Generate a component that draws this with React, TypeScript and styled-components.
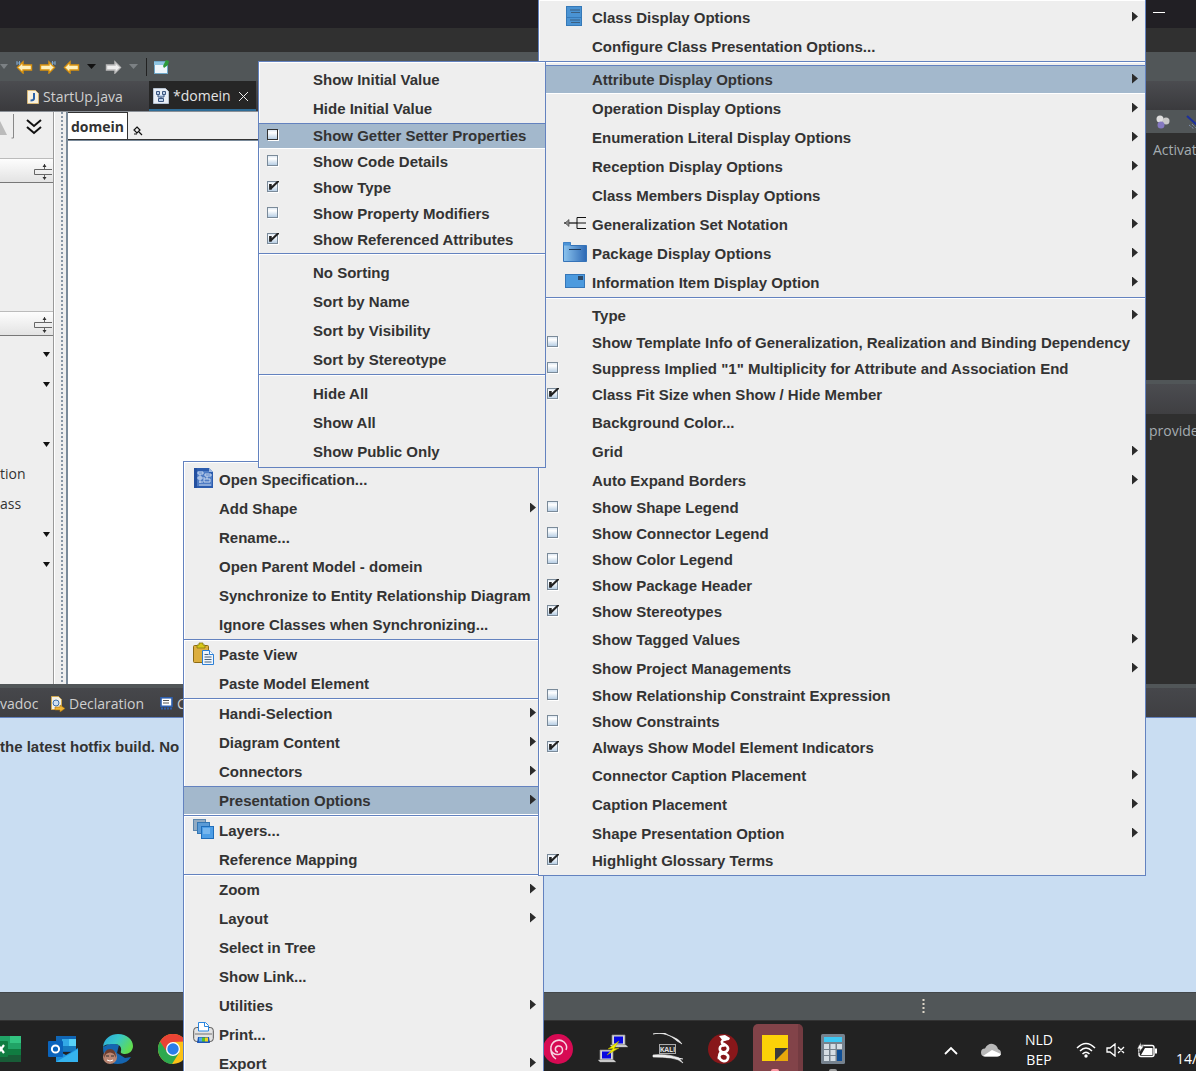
import React from "react";
import styled, { createGlobalStyle, css } from "styled-components";

const MENU_FONT = '"Liberation Sans", Arial, sans-serif';
const UI_FONT = '"Open Sans", "Noto Sans", sans-serif';
const LINE = "#6382bf";
const FACE = "#eeeeee";

const Global = createGlobalStyle`
  *, *::before, *::after { box-sizing: border-box; }
  html, body { margin: 0; height: 100%; overflow: hidden; background: #222; }
  button { border: 0; margin: 0; padding: 0; background: none; font: inherit; color: inherit; text-align: left; }
  svg { display: block; flex: none; }
`;

const Desktop = styled.div`
  position: relative;
  display: flex;
  flex-direction: column;
  height: 100vh;
  overflow: hidden;
  font: 14px/20px ${UI_FONT};
  color: #333;
  white-space: nowrap;
`;

/* ---------- application frame ---------- */

const TitleBar = styled.header`
  display: flex;
  justify-content: flex-end;
  align-items: center;
  height: 28px;
  padding-right: 31px;
  background: #211f24;
`;
const Minimize = styled.button`
  width: 12px;
  height: 4px;
  border-bottom: 1px solid #fff;
  margin-bottom: 6px;
`;
const MenuStrip = styled.div`
  height: 24px;
  background: #303030;
`;
const Toolbar = styled.div`
  display: flex;
  align-items: center;
  height: 29px;
  background: #515658;
`;
const Workbench = styled.main`
  display: flex;
  flex: 1;
  min-height: 0;
`;
const Editor = styled.section`
  display: flex;
  flex-direction: column;
  flex: 1;
  min-width: 0;
`;
const EditorTabs = styled.div`
  display: flex;
  height: 31px;
  padding-left: 17px;
  background: linear-gradient(#4b4c50, #3a3a3d);
  border-bottom: 1px solid #8a8f96;
`;
const EditorTab = styled.button<{ $active?: boolean }>`
  display: flex;
  align-items: center;
  gap: 4px;
  padding: 2px 10px 0;
  width: ${(p) => (p.$active ? 107 : 132)}px;
  color: ${(p) => (p.$active ? "#e4e4e4" : "#cfcfcf")};
  ${(p) =>
    p.$active &&
    css`
      padding: 2px 4px 0;
      background: #262626;
      border-bottom: 2px solid #2f6c96;
    `}
`;
const TabLabel = styled.span`
  flex: 1;
`;
const CloseTab = styled.span`
  padding-right: 3px;
`;
const EditorBody = styled.div`
  display: flex;
  flex: 1;
  min-height: 0;
  background: ${FACE};
`;
const Palette = styled.aside`
  display: flex;
  flex-direction: column;
  width: 54px;
  border-right: 1px solid #999;
  overflow: hidden;
`;
const PaletteTools = styled.div`
  display: flex;
  height: 46px;
`;
const PaletteHeader = styled.div`
  display: flex;
  justify-content: flex-end;
  align-items: center;
  height: 25px;
  border-top: 1px solid #bbb;
  border-bottom: 1px solid #777;
  background: linear-gradient(#fdfdfd, #e3e3e3);
`;
const PaletteSpace = styled.div`
  height: 128px;
`;
const PaletteList = styled.div`
  padding-top: 3px;
`;
const PaletteRow = styled.button`
  display: flex;
  justify-content: space-between;
  align-items: center;
  width: 100%;
  height: 30px;
  padding-right: 3px;
`;
const Splitter = styled.div`
  width: 14px;
  border-left: 1px solid #fff;
  border-right: 2px solid #7a8a99;
  background: radial-gradient(circle at 1px 1px, #8796a6 1px, transparent 1px) 6px 0 / 3px 4px repeat-y, ${FACE};
`;
const DiagramPane = styled.div`
  display: flex;
  flex-direction: column;
  flex: 1;
  min-width: 0;
  background: #fff;
`;
const Breadcrumb = styled.nav`
  display: flex;
  align-items: flex-start;
  gap: 5px;
  height: 29px;
  background: ${FACE};
  border-bottom: 1px solid #7a8a99;
  box-shadow: inset 0 -1px #333;
`;
const Crumb = styled.button`
  height: 28px;
  padding: 2px 3px 0;
  border: 1px solid #333;
  border-left: 0;
  background: #fff;
  font-weight: 700;
`;
const CrumbIcon = styled.span`
  padding-top: 14px;
`;

const SidePanel = styled.aside`
  display: flex;
  flex-direction: column;
  width: 60px;
  overflow: hidden;
  background: #2f2f2f;
  color: #a4acb0;
`;
const SideTabs = styled.div`
  height: 29px;
  background: linear-gradient(#4b4c50, #3a3a3d);
`;
const SideTools = styled.div`
  display: flex;
  align-items: center;
  gap: 8px;
  height: 23px;
  padding-left: 12px;
  background: #515658;
`;
const SideText = styled.p<{ $h?: number }>`
  margin: 0;
  padding: 7px 0 0 ${(p) => (p.$h ? 17 : 13)}px;
  height: ${(p) => (p.$h ? p.$h + "px" : "auto")};
`;
const SideBand = styled.div`
  height: 34px;
  border-top: 4px solid #515658;
  background: linear-gradient(#4b4c50, #3f3f42);
`;

const ViewTabs = styled.div`
  display: flex;
  align-items: center;
  height: 34px;
  padding-top: 4px;
  border-top: 4px solid #515658;
  border-bottom: 1px solid ${LINE};
  background: linear-gradient(#46474b, #3f3f42);
  color: #cfcfcf;
`;
const ViewTab = styled.button<{ $w: number }>`
  display: flex;
  align-items: center;
  gap: 4px;
  width: ${(p) => p.$w}px;
  height: 20px;
  padding-bottom: 2px;
`;
const Console = styled.section`
  height: 274px;
  padding-top: 19px;
  background: #c9ddf2;
  font: 700 15px/20px ${MENU_FONT};
`;
const StatusBar = styled.footer`
  display: flex;
  justify-content: flex-end;
  align-items: center;
  height: 28px;
  padding-right: 271px;
  border-top: 1px solid #43474a;
  background: #515658;
`;

/* ---------- taskbar ---------- */

const Taskbar = styled.footer`
  display: flex;
  align-items: center;
  height: 51px;
  border-top: 1px solid #333;
  background: #222;
  color: #fff;
  overflow: hidden;
`;
const TaskButton = styled.button<{ $w?: number; $running?: boolean }>`
  display: flex;
  justify-content: center;
  align-items: ${(p) => (p.$running ? "flex-end" : "center")};
  flex: none;
  width: ${(p) => p.$w ?? 55}px;
  height: 50px;
  padding-top: ${(p) => (p.$running ? 0 : 6)}px;
`;
const ActiveTask = styled.span`
  position: relative;
  display: flex;
  justify-content: center;
  align-items: center;
  width: 50px;
  height: 47px;
  border-radius: 5px 5px 0 0;
  background: #824349;
  border-right: 5px solid #733b41;
`;
const TaskGap = styled.div`
  width: 330px;
`;
const Tray = styled.div`
  display: flex;
  align-items: center;
  height: 50px;
  margin-left: auto;
  padding-top: 8px;
`;
const TrayButton = styled.button<{ $w: number }>`
  display: flex;
  justify-content: center;
  width: ${(p) => p.$w}px;
  text-align: center;
`;
const Clock = styled.time`
  width: 30px;
  padding: 18px 0 0 10px;
`;

/* ---------- pop-up menus ---------- */

const Popup = styled.div<{ $x: number; $y: number; $w: number; $lead: number; $gap: number; $z: number }>`
  position: absolute;
  left: ${(p) => p.$x}px;
  top: ${(p) => p.$y}px;
  z-index: ${(p) => p.$z};
  width: ${(p) => p.$w}px;
  padding: 3px 0 1px;
  border: 1px solid ${LINE};
  background: ${FACE};
  box-shadow: inset 1px 1px #fff;
  font: 700 15px/20px ${MENU_FONT};
  --lead: ${(p) => p.$lead}px;
  --gap: ${(p) => p.$gap}px;
`;
const rowStyle = css<{ $on?: boolean }>`
  display: flex;
  align-items: center;
  width: 100%;
  padding-right: 7px;
  ${(p) =>
    p.$on &&
    css`
      background: #a3b8cc;
      box-shadow: inset 0 1px ${LINE}, inset 0 -1px #fff;
    `}
`;
const MenuRow = styled.button<{ $on?: boolean }>`
  ${rowStyle}
  height: 29px;
`;
const CheckRow = styled.label<{ $on?: boolean }>`
  ${rowStyle}
  height: 26px;
`;
const Lead = styled.span<{ $check?: boolean }>`
  display: flex;
  flex: none;
  justify-content: ${(p) => (p.$check ? "flex-start" : "flex-end")};
  width: var(--lead);
  padding: ${(p) => (p.$check ? "0 0 3px 8px" : "0 5px 3px 0")};
`;
const RowText = styled.span`
  flex: 1;
`;
const Rule = styled.hr`
  height: 1px;
  margin: 0 0 var(--gap);
  border: 0;
  background: ${LINE};
  box-shadow: 0 1px #fff;
`;
const Arrow = styled.span`
  width: 6px;
  height: 10px;
  margin-bottom: 2px;
  background: #2b2b2b;
  clip-path: polygon(0 0, 100% 50%, 0 100%);
`;
const Check = styled.input<{ $on?: boolean }>`
  appearance: none;
  width: 11px;
  height: 11px;
  margin: 0;
  border: 1px solid ${(p) => (p.$on ? "#333" : "#7a8a99")};
  background: linear-gradient(#dfe9f3, #fff 30%, #b8cfe5);
  box-shadow: 1px 1px #fff;
  &:checked::after {
    content: "";
    display: block;
    width: 11px;
    height: 10px;
    margin-top: -1px;
    background: #222;
    clip-path: polygon(10% 30%, 34% 30%, 34% 50%, 82% 0, 100% 0, 100% 10%, 34% 80%, 34% 88%, 10% 88%);
  }
`;

/* ---------- drawings ---------- */

const ClassIcon = () => (
  <svg width="21" height="20" viewBox="0 0 21 20">
    <rect x="0" y="0" width="16" height="20" fill="#4a93d3" />
    <path d="M0 .5h16M0 11.5h16M0 19.5h16M.5 0v20M15.500 0v20" stroke="#3579b8" fill="none" />
    <path d="M4 4h10M5 6.500h9M4 14h10M5 16.500h9" stroke="#3b5f80" fill="none" />
  </svg>
);
const GenSetIcon = () => (
  <svg width="24" height="12" viewBox="0 0 24 12">
    <path d="M1 6h13" stroke="#666" strokeWidth="2" />
    <path d="M2 6l4-3.500v7z" fill="#888" stroke="#333" strokeWidth=".6" />
    <path d="M23 .5h-9v11h9M14 6h9" stroke="#111" fill="none" />
  </svg>
);
const PackageIcon = () => (
  <svg width="24" height="20" viewBox="0 0 24 20">
    <defs>
      <linearGradient id="pk"><stop offset="0" stopColor="#8cc4ee" /><stop offset="1" stopColor="#2c68b4" /></linearGradient>
    </defs>
    <path d="M.5.5h7v3h16v16H.5z" fill="url(#pk)" stroke="#3573b8" />
    <path d="M.5.5h7v3h-7z" fill="#4b93d6" />
    <path d="M6 7.500h12" stroke="#1e3b5c" />
  </svg>
);
const InfoIcon = () => (
  <svg width="23" height="14" viewBox="0 0 23 14">
    <rect x="1.500" y=".5" width="19" height="13" fill="#4c9ade" stroke="#3576b8" />
    <rect x="14" y="2" width="5" height="4" fill="#2f4a66" />
  </svg>
);
const SpecIcon = () => (
  <svg width="21" height="22" viewBox="0 0 21 22">
    <path d="M1 1h15l4 4v16H1z" fill="#2c5cae" />
    <path d="M1 1h3v20H1z" fill="#2450a0" />
    <path d="M16 1v4h4z" fill="#9db9e4" />
    <path d="M4 4h12v3h3v12H4z" fill="#4f7cc4" />
    <path d="M5 5h5v2H5zM12 7h6v2h-6zM5 10h4v2H5zM11 12h6v3h-6zM6 15h4M7 7v9M14 9v3M6 18h12M10 11h2" fill="none" stroke="#d3e0f4" strokeWidth=".9" />
  </svg>
);
const PasteIcon = () => (
  <svg width="21" height="23" viewBox="0 0 21 23">
    <rect x=".5" y="3.500" width="15" height="17" rx="1" fill="#dcae3f" stroke="#8c6a14" />
    <path d="M4 3h2V1h4v2h2v3H4z" fill="#d8c818" stroke="#877a0c" strokeWidth=".8" />
    <path d="M9.500 8.500h7l4 4v10h-11z" fill="#eef5fd" stroke="#2a7fd6" />
    <path d="M16.500 8.500v4h4" fill="#fff" stroke="#2a7fd6" />
    <path d="M11.500 12.500h4M11.500 15h7M11.500 17.500h7M11.500 20h7" stroke="#48627c" />
  </svg>
);
const LayersIcon = () => (
  <svg width="21" height="20" viewBox="0 0 21 20">
    <rect x=".5" y=".5" width="12" height="11" fill="#93abc2" stroke="#5c86ad" />
    <rect x="4.500" y="3.500" width="12" height="11" fill="#5b9bd6" stroke="#3477b4" />
    <rect x="8.500" y="7.500" width="12" height="12" fill="#4d9ee6" stroke="#1f6dbb" />
    <rect x="10" y="9" width="7" height="6" fill="#76b6ee" />
  </svg>
);
const PrintIcon = () => (
  <svg width="21" height="22" viewBox="0 0 21 22">
    <rect x=".7" y="5.500" width="19.600" height="14" rx="3" fill="#e3e3e3" stroke="#555" />
    <path d="M5.500 9V.5h7l3 3V9z" fill="#fff" stroke="#2a86e0" />
    <path d="M11.500.5v4h4" fill="none" stroke="#2a86e0" />
    <path d="M2 12h17" stroke="#aaa" strokeWidth="2" />
    <path d="M5 15h11l1 6H4z" fill="#1d56b8" />
    <path d="M6 15.500h3v4H6z" fill="#4fa8e8" /><path d="M9 15.500h3v4H9z" fill="#58bf2c" /><path d="M12 15.500h3v4h-3z" fill="#f0d31c" />
  </svg>
);

const NavArrow = ({ flip, white, mark }: { flip?: boolean; white?: boolean; mark?: boolean }) => (
  <svg width="17" height="14" viewBox="0 0 17 14">
    <g transform={flip ? "matrix(-1 0 0 1 17 0)" : undefined}>
      <path
        d="M1.500 7.500L7 2v3h8.500v5H7v3z"
        fill={white ? "#eee" : "#fdf0bd"}
        stroke={white ? "#bbb" : "#d9920f"}
        strokeWidth="1.400"
      />
      {mark && <path d="M1 1v4M3.500 1v4M.5 3h4" stroke="#7fa4c8" fill="none" />}
    </g>
  </svg>
);
const Caret = ({ color = "#111", w = 9 }: { color?: string; w?: number }) => (
  <svg width={w} height="5" viewBox="0 0 9 5" preserveAspectRatio="none"><path d="M0 0h9L4.500 5z" fill={color} /></svg>
);
const Tools = styled.div`
  display: flex;
  align-items: center;
`;
const Slot = styled.button<{ $w: number }>`
  width: ${(p) => p.$w}px;
`;
const Bar = styled.span<{ $h: number; $c?: string }>`
  width: 1px;
  height: ${(p) => p.$h}px;
  background: ${(p) => p.$c ?? "#222"};
`;
const WindowIcon = () => (
  <svg width="24" height="16" viewBox="0 0 24 16">
    <rect x="7.500" y="2.500" width="13" height="12" fill="#eef6fb" stroke="#6fa7c8" />
    <path d="M7 3h14v3H7z" fill="#8ec5e2" />
    <path d="M16 7l3-6 3 1-1 4-4 3z" fill="#2c9a3a" />
  </svg>
);
const JavaIcon = () => (
  <svg width="12" height="14" viewBox="0 0 12 14">
    <path d="M.5.5h8l3 3v10H.5z" fill="#f7f1df" stroke="#d8b878" />
    <path d="M7 3v5.500q0 2-3.500 2" fill="none" stroke="#2b62a8" strokeWidth="2" />
  </svg>
);
const DiagramIcon = () => (
  <svg width="16" height="16" viewBox="0 0 16 16">
    <path d="M.5.5h12l3 3v12H.5z" fill="#e8eef6" stroke="#b6c2d0" />
    <path d="M3.500 3.500h3v3h-3zM9.500 3.500h3v3h-3zM5.500 10.500h5v3h-5zM5 7v2h6V7M8 9v1.500" fill="#bcd0ea" stroke="#3b5680" />
  </svg>
);
const CloseIcon = () => (
  <svg width="11" height="11" viewBox="0 0 11 11"><path d="M1 1l9 9M10 1l-9 9" stroke="#eee" /></svg>
);
const CollapseIcon = () => (
  <svg width="20" height="20" viewBox="0 0 20 20">
    <path d="M19 8.500H1.500v5H19M11.500 3v5M11.500 14v4" fill="none" stroke="#666" />
    <path d="M9.500 6l2-3 2 3zM9.500 16l2 3 2-3z" fill="#333" />
  </svg>
);
const DeclIcon = () => (
  <svg width="15" height="16" viewBox="0 0 15 16">
    <path d="M1.500.5h7l3 3v10h-10z" fill="#f4f1e6" stroke="#d0a850" />
    <circle cx="6" cy="7" r="3" fill="#cfe0f2" stroke="#3b6ea8" />
    <path d="M5 11h5V9l5 3.500-5 3.500v-2H5z" fill="#f0b434" stroke="#a8700c" strokeWidth=".6" />
  </svg>
);
const ConsoleIcon = () => (
  <svg width="13" height="13" viewBox="0 0 13 13">
    <rect x="1" y=".8" width="11" height="8.500" fill="#fff" stroke="#2e5fae" strokeWidth="1.600" />
    <path d="M3 3.500h6M3 6h6" stroke="#555" /><path d="M1 11.500h11" stroke="#2e5fae" strokeWidth="2" strokeDasharray="2 1" />
  </svg>
);

const Excel = () => (
  <svg width="56" height="30" viewBox="0 0 56 30">
    <path d="M6 2h25v26H6z" fill="#21a366" /><path d="M20 2h11v7H20z" fill="#33c481" /><path d="M6 15h25v13H6z" fill="#107c41" /><path d="M6 21h25v7H6z" fill="#185c37" />
    <rect x="2" y="7" width="16" height="16" rx="1" fill="#107c41" />
    <path d="M8 11l6 8M14 11l-6 8" stroke="#fff" strokeWidth="2.200" />
  </svg>
);
const Outlook = () => (
  <svg width="30" height="28" viewBox="0 0 30 28">
    <path d="M8 1h20v16H8z" fill="#1066b5" /><path d="M14 4h7v8h-7z" fill="#32a9e7" /><path d="M21 4h7v8h-7z" fill="#58d2f8" /><path d="M14 11h14v5H14z" fill="#167abf" />
    <path d="M8 27V15l10 5 12-7v14z" fill="#1b8fdc" /><path d="M8 27l22-13v13z" fill="#35b3ee" />
    <rect x="0" y="6" width="15" height="16" rx="1" fill="#0b64bc" /><circle cx="7.500" cy="14" r="3.600" fill="none" stroke="#fff" strokeWidth="2" />
  </svg>
);
const Edge = () => (
  <svg width="32" height="32" viewBox="0 0 32 32">
    <defs>
      <linearGradient id="ed" x1="0" y1="0" x2="1" y2=".5"><stop offset="0" stopColor="#2aa5e0" /><stop offset=".5" stopColor="#38c8c8" /><stop offset="1" stopColor="#60dc50" /></linearGradient>
    </defs>
    <path d="M1 14q0 17 15 17 9 0 13-7l-6 1-8-5 2-8-8-2z" fill="#1565b0" />
    <path d="M1 14C2 5 9 1 16 1c9 0 15 6 15 12 0 5-4 8-8 8-3 0-5-1-4-3 1-4-2-7-6-7-6 0-10 0-12 3z" fill="url(#ed)" />
    <circle cx="8" cy="24" r="7" fill="#b98572" /><path d="M2 25q0-9 6-9t6 9l-2-4q-4-3-8 0z" fill="#6a3c2e" /><path d="M4 23h3M9 23h3" stroke="#333" /><path d="M5 27q3 2 6 0" stroke="#fff" fill="none" />
  </svg>
);
const Chrome = () => (
  <svg width="30" height="30" viewBox="0 0 30 30">
    <circle cx="15" cy="15" r="15" fill="#fbc116" />
    <path d="M2 7.500A15 15 0 0 1 28 7.500L15 8 8.500 19z" fill="#ea4335" /><path d="M2 7.500A15 15 0 0 0 14 30l7-11-12-1z" fill="#2da94f" />
    <circle cx="15" cy="15" r="7" fill="#fff" /><circle cx="15" cy="15" r="5.700" fill="#2b7de9" />
  </svg>
);
const Debian = () => (
  <svg width="30" height="30" viewBox="0 0 30 30">
    <circle cx="15" cy="15" r="15" fill="#d70a53" />
    <path d="M15 18c-3 0-4-5 0-6 5-1 6 6 2 8-5 2-10-2-9-7 1-6 8-9 13-5 3 3 3 6 2 8M8 12c-1 7 2 11 5 13" fill="none" stroke="#f6d5e1" strokeWidth="1.500" />
  </svg>
);
const Putty = () => (
  <svg width="30" height="30" viewBox="0 0 30 30">
    <g id="pc"><path d="M14 1h13v10H14z" fill="#d8d8d8" stroke="#888" strokeWidth=".7" /><path d="M16 2.500h9v7h-9z" fill="#0808e0" /><path d="M12 11h16l2 2H14z" fill="#eee" stroke="#777" strokeWidth=".6" /></g>
    <use href="#pc" x="-12" y="15" />
    <path d="M21 7l-11 8 5-.5L9 21l12-7-5 .5z" fill="#f5f000" stroke="#a8a400" strokeWidth=".5" />
  </svg>
);
const KaliName = styled.text`
  font: 700 7px ${UI_FONT};
`;
const Kali = () => (
  <svg width="32" height="32" viewBox="0 0 32 32">
    <path d="M1 1c9-2 18 1 24 7l5 3q-3-5-9-7t-8-4q-6-1-12 1zM1 22c10-1 19 0 26 3l4 5q-4-4-12-5t-18-1z" fill="#eee" stroke="#eee" strokeWidth=".6" />
    <path d="M14 24q10 0 17 2" fill="none" stroke="#eee" />
    <rect x="7.500" y="11.500" width="16" height="9" fill="#2c2c2c" stroke="#aaa" />
    <KaliName x="15.500" y="19" textAnchor="middle" fill="#ddd">KALI</KaliName>
  </svg>
);
const WireGuard = () => (
  <svg width="30" height="30" viewBox="0 0 30 30">
    <circle cx="15" cy="15" r="15" fill="#88171a" />
    <path d="M11 2l6-1 5 3-1 2-6 1z" fill="#fff" />
    <path d="M18 5c-3 1-5 2-4 4 4 2 8 4 5 8-2 2-6 2-7-1s2-6 5-4M13 18c-3 3-2 8 2 9 5 1 7-5 3-7s-8 1-7 5" fill="none" stroke="#fff" strokeWidth="2.600" />
  </svg>
);
const Sticky = () => (
  <svg width="26" height="26" viewBox="0 0 26 26">
    <path d="M0 0h26v26H0z" fill="#fcd208" /><path d="M13 26l13-13v13z" fill="#e8a80c" /><path d="M13 13h13L13 26z" fill="#3b3b3b" />
  </svg>
);
const Calculator = () => (
  <svg width="24" height="30" viewBox="0 0 24 30">
    <rect width="24" height="30" rx="1.500" fill="#76828e" /><path d="M3 3h18v5H3z" fill="#3ec8f4" />
    <path d="M3 10h5v5H3zM9.500 10h5v5h-5zM16 10h5v5h-5zM3 16h5v5H3zM9.500 16h5v5h-5zM3 22h5v5H3zM9.500 22h5v5h-5z" fill="#d5dde4" /><path d="M16 16h5v11h-5z" fill="#0f4f96" />
  </svg>
);
const Pill = styled.span<{ $c: string }>`
  position: absolute;
  left: 50%;
  bottom: 0;
  width: 8px;
  height: 2px;
  margin-left: -4px;
  border-radius: 2px 2px 0 0;
  background: ${(p) => p.$c};
`;
const RunningTask = styled.span`
  position: relative;
  display: flex;
  align-items: center;
  height: 45px;
`;

/* ---------- menu data ---------- */

type Item =
  | "-"
  | { t: string; icon?: React.ReactNode; sub?: boolean; check?: boolean; on?: boolean };

const i = (t: string, o: object = {}): Item => ({ t, ...o });
const s = (t: string, o: object = {}): Item => ({ t, sub: true, ...o });
const c = (t: string, check = false, on = false): Item => ({ t, check, on });

const contextMenu: Item[] = [
  i("Open Specification...", { icon: <SpecIcon /> }),
  s("Add Shape"),
  i("Rename..."),
  i("Open Parent Model - domein"),
  i("Synchronize to Entity Relationship Diagram"),
  i("Ignore Classes when Synchronizing..."),
  "-",
  i("Paste View", { icon: <PasteIcon /> }),
  i("Paste Model Element"),
  "-",
  s("Handi-Selection"),
  s("Diagram Content"),
  s("Connectors"),
  s("Presentation Options", { on: true }),
  "-",
  i("Layers...", { icon: <LayersIcon /> }),
  i("Reference Mapping"),
  "-",
  s("Zoom"),
  s("Layout"),
  i("Select in Tree"),
  i("Show Link..."),
  s("Utilities"),
  i("Print...", { icon: <PrintIcon /> }),
  s("Export"),
];

const presentationMenu: Item[] = [
  s("Class Display Options", { icon: <ClassIcon /> }),
  i("Configure Class Presentation Options..."),
  "-",
  s("Attribute Display Options", { on: true }),
  s("Operation Display Options"),
  s("Enumeration Literal Display Options"),
  s("Reception Display Options"),
  s("Class Members Display Options"),
  s("Generalization Set Notation", { icon: <GenSetIcon /> }),
  s("Package Display Options", { icon: <PackageIcon /> }),
  s("Information Item Display Option", { icon: <InfoIcon /> }),
  "-",
  s("Type"),
  c("Show Template Info of Generalization, Realization and Binding Dependency"),
  c('Suppress Implied "1" Multiplicity for Attribute and Association End'),
  c("Class Fit Size when Show / Hide Member", true),
  i("Background Color..."),
  s("Grid"),
  s("Auto Expand Borders"),
  c("Show Shape Legend"),
  c("Show Connector Legend"),
  c("Show Color Legend"),
  c("Show Package Header", true),
  c("Show Stereotypes", true),
  s("Show Tagged Values"),
  s("Show Project Managements"),
  c("Show Relationship Constraint Expression"),
  c("Show Constraints"),
  c("Always Show Model Element Indicators", true),
  s("Connector Caption Placement"),
  s("Caption Placement"),
  s("Shape Presentation Option"),
  c("Highlight Glossary Terms", true),
];

const attributeMenu: Item[] = [
  i("Show Initial Value"),
  i("Hide Initial Value"),
  c("Show Getter Setter Properties", false, true),
  c("Show Code Details"),
  c("Show Type", true),
  c("Show Property Modifiers"),
  c("Show Referenced Attributes", true),
  "-",
  i("No Sorting"),
  i("Sort by Name"),
  i("Sort by Visibility"),
  i("Sort by Stereotype"),
  "-",
  i("Hide All"),
  i("Show All"),
  i("Show Public Only"),
];

function MenuItems({ items }: { items: Item[] }) {
  return (
    <>
      {items.map((item, n) => {
        if (item === "-") return <Rule key={n} />;
        if (item.check !== undefined)
          return (
            <CheckRow key={n} $on={item.on}>
              <Lead $check>
                <Check type="checkbox" defaultChecked={item.check} $on={item.on} />
              </Lead>
              <RowText>{item.t}</RowText>
            </CheckRow>
          );
        return (
          <MenuRow key={n} $on={item.on} role="menuitem">
            <Lead>{item.icon}</Lead>
            <RowText>{item.t}</RowText>
            {item.sub && <Arrow />}
          </MenuRow>
        );
      })}
    </>
  );
}

const paletteRows: { t: string; menu: boolean }[] = [
  { t: "", menu: true },
  { t: "", menu: true },
  { t: "", menu: false },
  { t: "", menu: true },
  { t: "tion", menu: false },
  { t: "ass", menu: false },
  { t: "", menu: true },
  { t: "", menu: true },
];

export default function App() {
  return (
    <>
      <Global />
      <Desktop>
        <TitleBar>
          <Minimize aria-label="Minimize" />
        </TitleBar>
        <MenuStrip />
        <Toolbar>
          <Tools>
            <Slot $w={16} aria-label="History"><Caret color="#7c8184" w={8} /></Slot>
            <Slot $w={23} aria-label="Previous edit"><NavArrow mark /></Slot>
            <Slot $w={24} aria-label="Next edit"><NavArrow flip mark /></Slot>
            <Slot $w={24} aria-label="Back"><NavArrow /></Slot>
            <Slot $w={18} aria-label="Back history"><Caret /></Slot>
            <Slot $w={24} aria-label="Forward"><NavArrow flip white /></Slot>
            <Slot $w={17} aria-label="Forward history"><Caret color="#7c8184" /></Slot>
            <Bar $h={18} />
          </Tools>
          <Slot $w={24} aria-label="New window"><WindowIcon /></Slot>
        </Toolbar>

        <Workbench>
          <Editor>
            <EditorTabs>
              <EditorTab>
                <JavaIcon />
                <TabLabel>StartUp.java</TabLabel>
              </EditorTab>
              <EditorTab $active>
                <DiagramIcon />
                <TabLabel>*domein</TabLabel>
                <CloseTab><CloseIcon /></CloseTab>
              </EditorTab>
            </EditorTabs>
            <EditorBody>
              <Palette>
                <PaletteTools>
                  <svg width="54" height="46" viewBox="0 0 54 46">
                    <path d="M-4 23L0 9l7 14z" fill="#bbb" />
                    <path d="M13.500 2v24h-2" stroke="#888" fill="none" />
                    <path d="M27 8l7 6 7-6M27 15l7 6 7-6" fill="none" stroke="#111" strokeWidth="2" />
                  </svg>
                </PaletteTools>
                <PaletteHeader><CollapseIcon /></PaletteHeader>
                <PaletteSpace />
                <PaletteHeader><CollapseIcon /></PaletteHeader>
                <PaletteList>
                  {paletteRows.map((r, n) => (
                    <PaletteRow key={n}>
                      <span>{r.t}</span>
                      {r.menu && <Caret w={7} />}
                    </PaletteRow>
                  ))}
                </PaletteList>
              </Palette>
              <Splitter />
              <DiagramPane>
                <Breadcrumb>
                  <Crumb>domein</Crumb>
                  <CrumbIcon>
                    <svg width="10" height="10" viewBox="0 0 10 10">
                      <path d="M4 1l3 3-3 3-3-3zM6 6l3 3M1 8h3" fill="none" stroke="#111" strokeWidth="1.200" />
                    </svg>
                  </CrumbIcon>
                </Breadcrumb>
              </DiagramPane>
            </EditorBody>
          </Editor>
          <SidePanel>
            <SideTabs />
            <SideTools>
              <Bar $h={17} />
              <svg width="14" height="14" viewBox="0 0 14 14">
                <circle cx="4" cy="4" r="3.500" fill="#ddd" /><circle cx="10" cy="6" r="3.500" fill="#c8c8c8" /><circle cx="5" cy="10" r="3.500" fill="#8478c0" />
              </svg>
              <Bar $h={17} $c="#999" />
              <svg width="12" height="14" viewBox="0 0 12 14">
                <path d="M1 1l11 10" stroke="#1c2f9c" strokeWidth="2" /><path d="M3 10l5 4M6 9l4 4" stroke="#8aa0c8" strokeDasharray="1 1" />
              </svg>
            </SideTools>
            <SideText $h={247}>Activate</SideText>
            <SideBand />
            <SideText>provide</SideText>
          </SidePanel>
        </Workbench>

        <ViewTabs>
          <ViewTab $w={50}>vadoc</ViewTab>
          <ViewTab $w={110}><DeclIcon />Declaration</ViewTab>
          <ViewTab $w={30}><ConsoleIcon />C</ViewTab>
        </ViewTabs>
        <Console>the latest hotfix build. No r</Console>
        <StatusBar>
          <svg width="3" height="15" viewBox="0 0 3 15">
            <path d="M1.500 0v15" stroke="#ddd6c8" strokeWidth="2" strokeDasharray="2 2" />
          </svg>
        </StatusBar>

        <Taskbar>
          <TaskButton $w={35} aria-label="Excel"><Excel /></TaskButton>
          <TaskButton aria-label="Outlook"><Outlook /></TaskButton>
          <TaskButton aria-label="Edge"><Edge /></TaskButton>
          <TaskButton aria-label="Chrome"><Chrome /></TaskButton>
          <TaskGap />
          <TaskButton aria-label="Debian"><Debian /></TaskButton>
          <TaskButton aria-label="PuTTY"><Putty /></TaskButton>
          <TaskButton aria-label="Kali"><Kali /></TaskButton>
          <TaskButton aria-label="WireGuard"><WireGuard /></TaskButton>
          <TaskButton $running aria-label="Sticky Notes">
            <ActiveTask><Sticky /><Pill $c="#ff99a4" /></ActiveTask>
          </TaskButton>
          <TaskButton $running aria-label="Calculator">
            <RunningTask><Calculator /><Pill $c="#999" /></RunningTask>
          </TaskButton>
          <Tray>
            <TrayButton $w={40} aria-label="Show hidden icons">
              <svg width="14" height="9" viewBox="0 0 14 9"><path d="M1 8l6-6 6 6" fill="none" stroke="#fff" strokeWidth="1.800" /></svg>
            </TrayButton>
            <TrayButton $w={40} aria-label="OneDrive">
              <svg width="20" height="14" viewBox="0 0 20 14">
                <path d="M4 13.500a4 4 0 0 1 0-8Q7 0 12 1q4 1 5 5 3 1 3 4t-3 3.500z" fill="#b8b8b8" />
                <path d="M2 13l9-6 9 4q-1 2.500-4 2.500H4z" fill="#fff" />
              </svg>
            </TrayButton>
            <TrayButton $w={56}>NLD<br />BEP</TrayButton>
            <TrayButton $w={38} aria-label="Network">
              <svg width="20" height="16" viewBox="0 0 20 16">
                <path d="M1 6q9-9 18 0M4 9q6-6 12 0M6.500 12q3.500-3.500 7 0" fill="none" stroke="#fff" strokeWidth="1.500" /><circle cx="10" cy="14" r="1.700" fill="#fff" />
              </svg>
            </TrayButton>
            <TrayButton $w={22} aria-label="Sound">
              <svg width="20" height="14" viewBox="0 0 20 14">
                <path d="M1 5h3l5-4v12L4 9H1zM12 4l6 6M18 4l-6 6" fill="none" stroke="#fff" strokeWidth="1.300" />
              </svg>
            </TrayButton>
            <TrayButton $w={39} aria-label="Battery">
              <svg width="20" height="16" viewBox="0 0 20 16">
                <rect x="2" y="3.500" width="15" height="11" rx="2" fill="none" stroke="#fff" strokeWidth="1.400" />
                <path d="M4 13l4-7h7.500v7zM18 6.500h2v5h-2z" fill="#fff" /><path d="M4 0L0 7h3l-1 4 5-7H4z" fill="#fff" stroke="#222" strokeWidth=".6" />
              </svg>
            </TrayButton>
            <Clock>14/</Clock>
          </Tray>
        </Taskbar>

        <Popup role="menu" $x={183} $y={461} $w={361} $lead={35} $gap={0} $z={1}>
          <MenuItems items={contextMenu} />
        </Popup>
        <Popup role="menu" $x={538} $y={-1} $w={608} $lead={53} $gap={3} $z={2}>
          <MenuItems items={presentationMenu} />
        </Popup>
        <Popup role="menu" $x={258} $y={61} $w={288} $lead={54} $gap={4} $z={3}>
          <MenuItems items={attributeMenu} />
        </Popup>
      </Desktop>
    </>
  );
}
